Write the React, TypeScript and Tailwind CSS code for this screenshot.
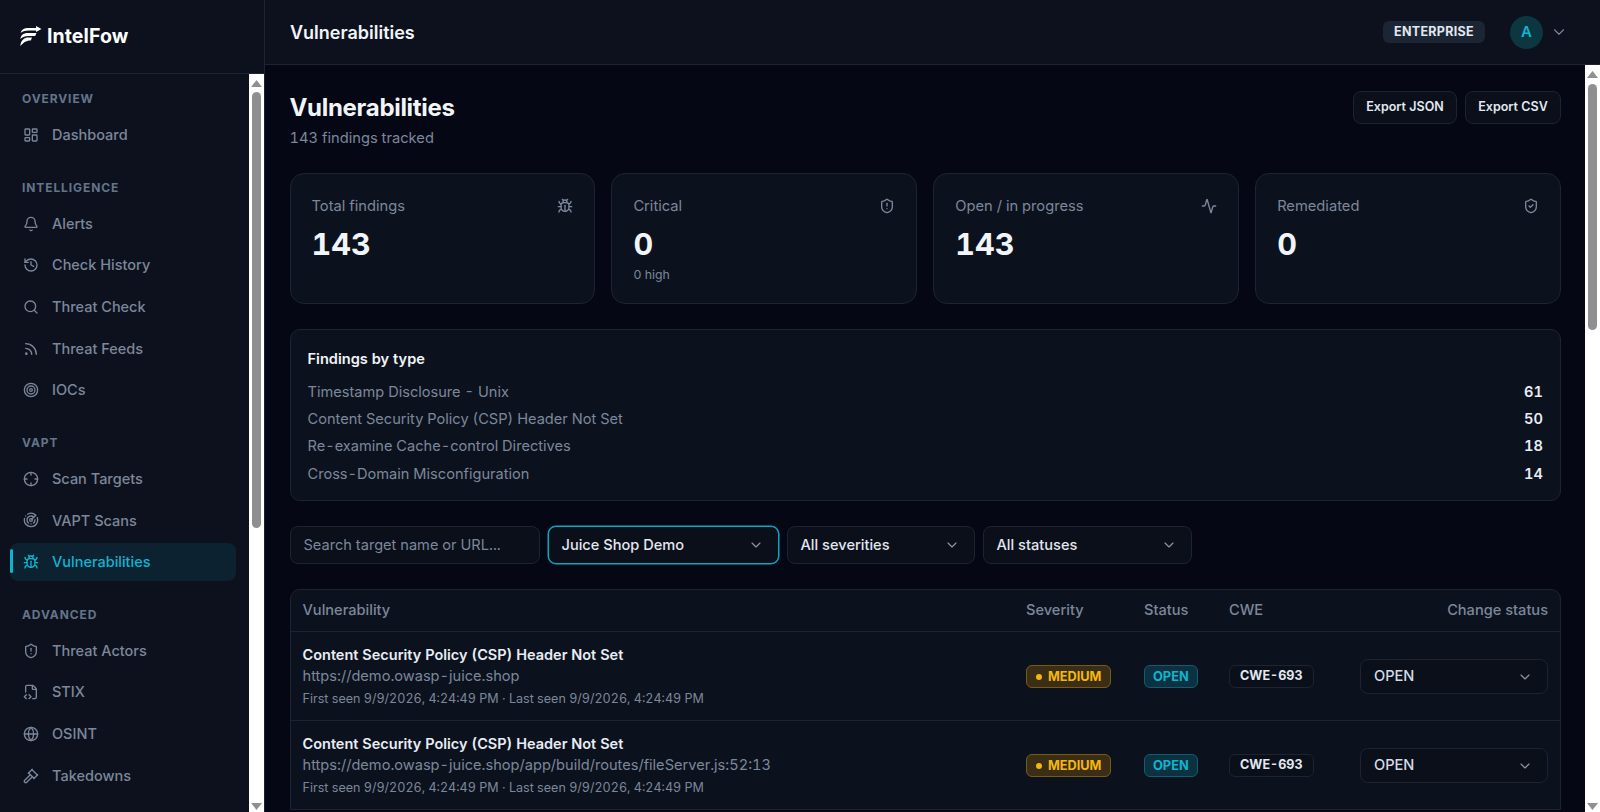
import {
  Activity,
  Bell,
  Bug,
  ChevronDown,
  Crosshair,
  FileCode2,
  Gavel,
  Globe,
  History,
  LayoutDashboard,
  Radar,
  Rss,
  Search,
  ShieldAlert,
  ShieldCheck,
  Target,
  type LucideIcon,
} from "lucide-react";

interface NavItem {
  label: string;
  icon: LucideIcon;
  active?: boolean;
}

const NAV: { title: string; items: NavItem[] }[] = [
  { title: "OVERVIEW", items: [{ label: "Dashboard", icon: LayoutDashboard }] },
  {
    title: "INTELLIGENCE",
    items: [
      { label: "Alerts", icon: Bell },
      { label: "Check History", icon: History },
      { label: "Threat Check", icon: Search },
      { label: "Threat Feeds", icon: Rss },
      { label: "IOCs", icon: Target },
    ],
  },
  {
    title: "VAPT",
    items: [
      { label: "Scan Targets", icon: Crosshair },
      { label: "VAPT Scans", icon: Radar },
      { label: "Vulnerabilities", icon: Bug, active: true },
    ],
  },
  {
    title: "ADVANCED",
    items: [
      { label: "Threat Actors", icon: ShieldAlert },
      { label: "STIX", icon: FileCode2 },
      { label: "OSINT", icon: Globe },
      { label: "Takedowns", icon: Gavel },
    ],
  },
];

const STATS = [
  { label: "Total findings", value: "143", icon: Bug },
  { label: "Critical", value: "0", sub: "0 high", icon: ShieldAlert },
  { label: "Open / in progress", value: "143", icon: Activity },
  { label: "Remediated", value: "0", icon: ShieldCheck },
];

const TYPES = [
  { name: "Timestamp Disclosure - Unix", count: 61 },
  { name: "Content Security Policy (CSP) Header Not Set", count: 50 },
  { name: "Re-examine Cache-control Directives", count: 18 },
  { name: "Cross-Domain Misconfiguration", count: 14 },
];

const ROWS = [
  "https://demo.owasp-juice.shop",
  "https://demo.owasp-juice.shop/app/build/routes/fileServer.js:52:13",
];

function Logo() {
  return (
    <div className="flex items-center gap-[5px]">
      <svg width="22" height="20" viewBox="0 0 22 20" fill="white">
        <path d="M.5 7C1.500 3.500 4 2 8 2h8V0l5.500 3-5.500 3V4.500H9C5.500 4.500 3 5.200.5 7Z" />
        <path d="M.4 13C.8 9 3.500 7 8 7h8.500l-1.300 3H8.500C5 10 2.500 11 .4 13Z" />
        <path d="M.4 20C.6 15.500 3 12.500 7 11.500h5l-1.200 3H9C5.500 15 3 17 .4 20Z" />
      </svg>
      <span className="text-[19.500px] font-bold leading-[24px] tracking-[0.1px] text-white">IntelFow</span>
    </div>
  );
}

// the browser hides native scrollbars in this shot, so the classic bar is drawn
function ScrollBar({ topGap, thumb }: { topGap: string; thumb: string }) {
  return (
    <div className="flex h-full w-[15px] shrink-0 flex-col items-center bg-white">
      <svg width="11" height="7" viewBox="0 0 11 7" className="mt-[6px] shrink-0">
        <path d="M5.500 0 11 7H0Z" fill="#8f8f8f" />
      </svg>
      <div className={`w-[9px] shrink-0 rounded-full bg-[#8f8f8f] ${topGap} ${thumb}`} />
      <svg width="11" height="7" viewBox="0 0 11 7" className="mb-[2px] mt-auto shrink-0">
        <path d="M5.500 7 11 0H0Z" fill="#8f8f8f" />
      </svg>
    </div>
  );
}

function Sidebar() {
  return (
    <aside className="flex h-full w-[265px] shrink-0 flex-col border-r border-[#1c2331] bg-[#0c111d]">
      <div className="flex h-[74px] shrink-0 items-center border-b border-[#1c2331] pb-[2px] pl-[20px]">
        <Logo />
      </div>
      <div className="flex min-h-0 flex-1">
        <nav className="min-w-0 flex-1 overflow-hidden pt-[16px]">
          {NAV.map((group) => (
            <div key={group.title} className="mb-[24.500px]">
              <div className="mb-[8px] pl-[22px] text-[12px] font-bold leading-[18px] tracking-[0.9px] text-[#64748b]">
                {group.title}
              </div>
              <div className="flex flex-col gap-[3.700px]">
                {group.items.map((item) => (
                  <div
                    key={item.label}
                    className={
                      item.active
                        ? "relative ml-[10px] flex h-[38px] w-[226px] items-center gap-[13px] rounded-[8px] bg-[#0d2231] pl-[13px] text-[14.500px] font-medium text-[#0fb5d0]"
                        : "ml-[10px] flex h-[38px] w-[226px] items-center gap-[13px] rounded-[8px] pl-[13px] text-[14.500px] font-medium text-[#7c879b]"
                    }
                  >
                    {item.active && (
                      <span className="absolute left-0 top-[6px] h-[24px] w-[3px] rounded-full bg-[#0fb5d0]" />
                    )}
                    <item.icon size={16} strokeWidth={2} />
                    {item.label}
                  </div>
                ))}
              </div>
            </div>
          ))}
        </nav>
        <ScrollBar topGap="mt-[5px]" thumb="h-[436px]" />
      </div>
    </aside>
  );
}

function Select({ label, width, focused }: { label: string; width: string; focused?: boolean }) {
  return (
    <div
      className={`flex h-[38px] items-center justify-between rounded-[8px] border bg-[#0a0f1a] pl-[13px] pr-[14px] text-[14.600px] font-medium text-[#e2e8f0] ${width} ${
        focused ? "border-[#0ea5c0] ring-[0.5px] ring-[#0ea5c0]" : "border-[#1c2331]"
      }`}
    >
      <span className="pt-[1px]">{label}</span>
      <ChevronDown size={16} strokeWidth={1.75} className="text-[#8a94a6]" />
    </div>
  );
}

function Row({ url }: { url: string }) {
  return (
    <div className="grid grid-cols-[1fr_118px_85px_319px] items-center border-t border-[#1c2331] px-[12px] pb-[13px] pt-[13px]">
      <div>
        <div className="text-[14.500px] font-semibold leading-[20px] text-[#e8edf5]">
          Content Security Policy (CSP) Header Not Set
        </div>
        <div className="mt-[1px] text-[14.600px] leading-[20px] text-[#7c879b]">{url}</div>
        <div className="mt-[5px] text-[12.550px] leading-[16px] text-[#7c879b]">
          First seen 9/9/2026, 4:24:49 PM · Last seen 9/9/2026, 4:24:49 PM
        </div>
      </div>
      <div className="flex pt-[1px]">
        <span className="inline-flex h-[23px] items-center gap-[6px] rounded-[6px] border border-[#7a5a12] bg-[#3a2f16] px-[9px] text-[12.700px] font-bold text-[#f5b70b]">
          <span className="h-[6px] w-[6px] rounded-full bg-[#f5b70b]" />
          MEDIUM
        </span>
      </div>
      <div className="flex pt-[1px]">
        <span className="inline-flex h-[23px] items-center rounded-[6px] border border-[#0e5f73] bg-[#0c3140] px-[8px] text-[12.800px] font-bold text-[#0fb5d0]">
          OPEN
        </span>
      </div>
      <div className="flex items-center justify-between pt-[1px]">
        <span className="inline-flex h-[23px] items-center rounded-[6px] border border-[#1c2331] bg-[#0a0f1a] px-[10px] text-[12.600px] font-bold text-[#e2e8f0]">
          CWE-693
        </span>
        <div className="flex h-[35px] w-[188px] items-center justify-between rounded-[8px] border border-[#1c2331] bg-[#0a0f1a] pl-[13px] pr-[14px] text-[14.600px] font-medium text-[#d5dbe3]">
          <span className="pt-[1px]">OPEN</span>
          <ChevronDown size={16} strokeWidth={1.75} className="text-[#8a94a6]" />
        </div>
      </div>
    </div>
  );
}

export default function App() {
  return (
    <div className="flex h-[812px] w-[1600px] overflow-hidden bg-[#050814] font-['Inter',sans-serif] tabular-nums">
      <Sidebar />
      <div className="flex min-w-0 flex-1 flex-col">
        <header className="flex h-[65px] shrink-0 items-center justify-between border-b border-[#1c2331] bg-[#0c111d] pl-[25px] pr-[32px]">
          <h1 className="text-[18px] font-semibold text-[#f1f5f9]">Vulnerabilities</h1>
          <div className="flex items-center">
            <span className="flex h-[22px] w-[102px] items-center justify-center rounded-[6px] bg-[#1c2533] text-[12.500px] font-bold tracking-[0.3px] text-[#e2e8f0]">
              ENTERPRISE
            </span>
            <span className="ml-[25px] flex h-[33px] w-[33px] items-center justify-center rounded-full bg-[#0c3640] text-[15px] font-semibold text-[#0fb5d0]">
              A
            </span>
            <ChevronDown size={18} strokeWidth={1.5} className="ml-[7px] text-[#7c879b]" />
          </div>
        </header>
        <div className="flex min-h-0 flex-1">
          <main className="min-w-0 flex-1 overflow-hidden pl-[24.500px] pr-[24px] pt-[27px]">
            <div className="flex items-start justify-between">
              <div>
                <h2 className="text-[24px] font-bold leading-[32px] tracking-[-0.300px] text-[#f1f5f9]">Vulnerabilities</h2>
                <p className="mt-[4px] text-[14.700px] leading-[20px] text-[#7c879b]">143 findings tracked</p>
              </div>
              <div className="-mt-[1px] flex gap-[8px]">
                <button className="h-[33px] w-[104px] rounded-[8px] border border-[#1c2331] bg-[#0a0f1a] text-[12.500px] font-semibold text-[#e2e8f0]">
                  Export JSON
                </button>
                <button className="h-[33px] w-[96px] rounded-[8px] border border-[#1c2331] bg-[#0a0f1a] text-[12.500px] font-semibold text-[#e2e8f0]">
                  Export CSV
                </button>
              </div>
            </div>

            <div className="mt-[25px] grid grid-cols-4 gap-[16px]">
              {STATS.map((s) => (
                <div
                  key={s.label}
                  className="h-[131px] rounded-[14px] border border-[#1c2331] bg-[#0c121d] px-[21px] pt-[21px]"
                >
                  <div className="flex items-center justify-between">
                    <span className="text-[14.700px] leading-[22px] text-[#7c879b]">{s.label}</span>
                    <s.icon size={16} className="text-[#7c879b]" />
                  </div>
                  <div className="mt-[7px] text-[30.500px] font-bold leading-[40px] text-[#f1f5f9]">{s.value}</div>
                  {s.sub && <div className="mt-[3px] text-[12.300px] leading-[16px] text-[#7c879b]">{s.sub}</div>}
                </div>
              ))}
            </div>

            <div className="mt-[25px] h-[172px] rounded-[10px] border border-[#1c2331] bg-[#0c121d] px-[17px] pt-[19px]">
              <div className="mb-[10px] text-[14.600px] font-semibold leading-[20px] text-[#f1f5f9]">Findings by type</div>
              {TYPES.map((t) => (
                <div key={t.name} className="flex h-[27.300px] items-center justify-between text-[14.600px]">
                  <span className="text-[#7c879b]">{t.name}</span>
                  <span className="font-semibold text-[#e8edf5]">{t.count}</span>
                </div>
              ))}
            </div>

            <div className="mt-[25px] flex items-center gap-[8px]">
              <div className="flex h-[38px] w-[250px] items-center rounded-[8px] border border-[#1c2331] bg-[#0a0f1a] pl-[13px] pt-[1px] text-[14.600px] text-[#7c879b]">
                Search target name or URL...
              </div>
              <Select label="Juice Shop Demo" width="w-[231px]" focused />
              <Select label="All severities" width="w-[188px]" />
              <Select label="All statuses" width="w-[209px]" />
            </div>

            <div className="mt-[25px] rounded-t-[10px] border border-[#1c2331] bg-[#0c121d]">
              <div className="grid h-[41px] grid-cols-[1fr_118px_85px_319px] items-center px-[12px] text-[14.600px] font-medium text-[#7c879b]">
                <span>Vulnerability</span>
                <span>Severity</span>
                <span>Status</span>
                <span className="flex justify-between">
                  CWE
                  <span>Change status</span>
                </span>
              </div>
              {ROWS.map((url) => (
                <Row key={url} url={url} />
              ))}
            </div>
          </main>
          <ScrollBar topGap="mt-[6px]" thumb="h-[246px]" />
        </div>
      </div>
    </div>
  );
}
